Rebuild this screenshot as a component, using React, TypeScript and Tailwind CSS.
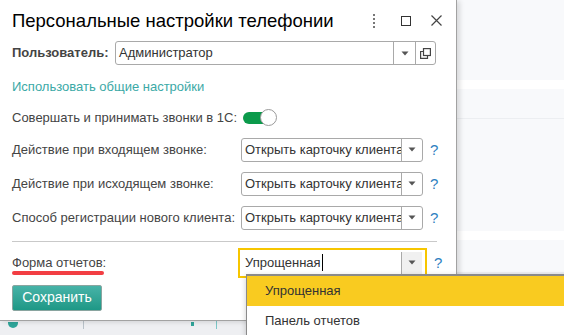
import React from "react";

const Caret = () => (
  <svg width="8" height="5" viewBox="0 0 8 5">
    <path d="M0.5 0.5 L7.5 0.5 L4 4.5 Z" fill="#555" />
  </svg>
);

const Select = ({ value }: { value: string }) => (
  <div className="flex h-[24px] w-[182px] items-stretch rounded-[3px] border border-[#a9a9a9] bg-white">
    <div className="flex-1 overflow-hidden whitespace-nowrap pl-[3px] leading-[22px] text-[#333]">
      {value}
    </div>
    <div className="flex w-[21px] items-center justify-center border-l border-[#a9a9a9]">
      <Caret />
    </div>
  </div>
);

const Help = () => (
  <span className="ml-[7px] text-[15px] leading-none text-[#2d7fc1]">?</span>
);

const Row = ({ label, value }: { label: string; value: string }) => (
  <div className="flex h-[24px] items-center">
    <div className="w-[229px] text-[#444]">{label}</div>
    <Select value={value} />
    <Help />
  </div>
);

export default function App() {
  return (
    <div className="relative h-[335px] w-[564px] overflow-hidden bg-[#f8f9fb] font-['Liberation_Sans',Arial,sans-serif] text-[13px]">
      {/* page behind the dialog */}
      <div className="flex h-full flex-col">
        <div className="h-[80px] bg-[#f8f9fb]" />
        <div className="h-[9px] bg-white" />
        <div className="h-[30px] border-b border-[#eceef1] bg-[#f8f9fb]" />
        <div className="h-[112px] bg-[#f8f9fb]" />
        <div className="h-[9px] bg-white" />
        <div className="h-[32px] bg-[#f8f9fb]" />
        <div className="flex flex-1 items-end bg-[#eeeff2]">
          <div className="flex h-[14px] w-full items-start">
            <div className="ml-[8px] mt-[1px] h-[6px] w-[10px] rounded-b-full bg-[#2fa59a]" />
            <div className="ml-[65px] h-[8px] w-px bg-[#b9c2c9]" />
            <div className="ml-[107px] mt-[1px] h-[4px] w-[3px] bg-[#2fa59a]" />
            <div className="ml-[22px] h-[8px] w-px bg-[#7cc7c8]" />
          </div>
        </div>
      </div>

      {/* dialog window */}
      <div className="absolute left-0 top-0 flex h-[321px] w-[457px] flex-col border-b border-r border-[#a2a2a2] bg-white pl-[12px] text-[#333] shadow-[3px_1px_5px_rgba(0,0,0,0.13)]">
        <div className="flex h-[41px] items-center">
          <div className="flex-1 pt-[1px] text-[18.5px] text-black">
            Персональные настройки телефонии
          </div>
          <div className="flex flex-col gap-[2px]">
            <span className="h-[2px] w-[2px] bg-[#777]" />
            <span className="h-[2px] w-[2px] bg-[#777]" />
            <span className="h-[2px] w-[2px] bg-[#777]" />
            <span className="h-[2px] w-[2px] bg-[#777]" />
          </div>
          <div className="ml-[26px] h-[10px] w-[10px] border-[1.5px] border-[#333]" />
          <svg className="ml-[20px] mr-[14px]" width="11" height="11" viewBox="0 0 11 11">
            <path d="M0.5 0.5 L10.5 10.5 M10.5 0.5 L0.5 10.5" stroke="#444" strokeWidth="1.2" />
          </svg>
        </div>

        <div className="flex h-[24px] items-center">
          <div className="w-[103px] font-bold text-[#444]">Пользователь:</div>
          <div className="flex h-[24px] w-[321px] items-stretch rounded-[3px] border border-[#a9a9a9]">
            <div className="flex-1 pl-[3px] leading-[22px] text-[#333]">Администратор</div>
            <div className="flex w-[22px] items-center justify-center border-l border-[#a9a9a9]">
              <Caret />
            </div>
            <div className="flex w-[20px] items-center justify-center border-l border-[#a9a9a9]">
              <svg width="11" height="11" viewBox="0 0 11 11" fill="none" stroke="#444" strokeWidth="1.2">
                <rect x="3.5" y="0.6" width="6.9" height="6.9" />
                <path d="M3.5 3.5 H0.6 V10.4 H7.5 V7.5" />
              </svg>
            </div>
          </div>
        </div>

        <div className="mt-[12px] text-[#3ba9a6]">Использовать общие настройки</div>

        <div className="mt-[12px] flex h-[18px] items-center">
          <div className="w-[231px] text-[#444]">Совершать и принимать звонки в 1С:</div>
          <div className="relative flex h-[17px] w-[34px] items-center">
            <div className="h-[12px] w-[28px] rounded-full bg-[#0b9a4b]" />
            <div className="absolute right-0 top-0 h-[17px] w-[17px] rounded-full border border-[#9a9a9a] bg-white" />
          </div>
        </div>

        <div className="mt-[11px] flex flex-col gap-[10px]">
          <Row label="Действие при входящем звонке:" value="Открыть карточку клиента" />
          <Row label="Действие при исходящем звонке:" value="Открыть карточку клиента" />
          <Row label="Способ регистрации нового клиента:" value="Открыть карточку клиента" />
        </div>

        <div className="mr-[19px] mt-[11px] h-px bg-[#c9c9c9]" />

        <div className="mt-[6px] flex h-[30px] items-center">
          <div className="relative w-[226px] text-[#444]">
            Форма отчетов:
            <div className="absolute left-0 top-[18px] h-[4px] w-[92px] rounded-full bg-[#f23e43]" />
          </div>
          <div className="flex h-[30px] w-[189px] items-stretch border-2 border-[#f7c600] bg-white">
            <div className="flex flex-1 items-center pl-[5px] text-[#333]">
              Упрощенная<span className="ml-px h-[17px] w-px bg-black" />
            </div>
            <div className="my-[2px] mr-[3px] flex w-[21px] items-center justify-center border-l border-[#a9a9a9] bg-[#f0f0f0]">
              <Caret />
            </div>
          </div>
          <Help />
        </div>

        <div className="mt-[7px]">
          <button className="h-[26px] w-[90px] rounded-[2px] border border-[#8aa5a0] bg-gradient-to-b from-[#46b3a8] to-[#1d9886] text-[14px] text-white">
            Сохранить
          </button>
        </div>
      </div>

      {/* open dropdown list */}
      <div className="absolute left-[246px] top-[274px] w-[330px] border-l border-t-2 border-[#8a8a8a] bg-white text-[13px] text-[#333] shadow-[0_2px_6px_rgba(0,0,0,0.2)]">
        <div className="flex h-[30px] items-center bg-[#f9cb20] pl-[18px]">Упрощенная</div>
        <div className="flex h-[30px] items-center pl-[18px]">Панель отчетов</div>
      </div>
    </div>
  );
}
